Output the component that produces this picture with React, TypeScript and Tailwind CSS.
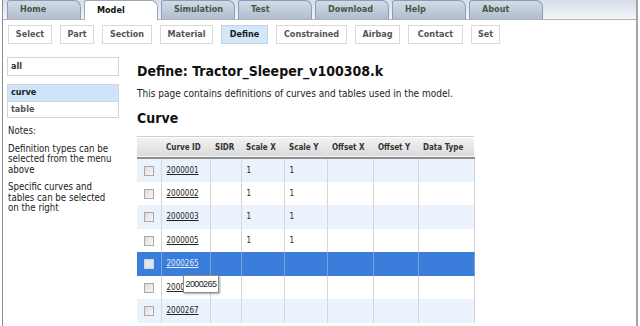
import React from "react";

const tabs = ["Home", "Model", "Simulation", "Test", "Download", "Help", "About"];
const subTabs = [
  { label: "Select", w: "w-[44px]" },
  { label: "Part", w: "w-[34px]" },
  { label: "Section", w: "w-[50px]" },
  { label: "Material", w: "w-[53px]" },
  { label: "Define", w: "w-[47px]" },
  { label: "Constrained", w: "w-[71px]" },
  { label: "Airbag", w: "w-[45px]" },
  { label: "Contact", w: "w-[55px]" },
  { label: "Set", w: "w-[29px]" },
];
const columns = ["Curve ID", "SIDR", "Scale X", "Scale Y", "Offset X", "Offset Y", "Data Type"];
const colWidths = ["w-[24px]", "w-[49px]", "w-[31px]", "w-[43px]", "w-[43px]", "w-[46px]", "w-[45px]", "w-[56px]"];

const rows = [
  { id: "2000001", sx: "1", sy: "1" },
  { id: "2000002", sx: "1", sy: "1" },
  { id: "2000003", sx: "1", sy: "1" },
  { id: "2000005", sx: "1", sy: "1" },
  { id: "2000265", sx: "", sy: "", selected: true },
  { id: "2000266", sx: "", sy: "" },
  { id: "2000267", sx: "", sy: "" },
];

function Checkbox({ selected }: { selected?: boolean }) {
  return (
    <span
      className={
        "block h-[10px] w-[10px] border " +
        (selected ? "border-[#c8d6ea] bg-[#dfe6ef]" : "border-[#a9a9a9] bg-gradient-to-br from-[#dcdcdc] to-[#f8f8f8]")
      }
    />
  );
}

export default function App() {
  return (
    <div className="relative h-[326px] w-[640px] overflow-hidden bg-white font-['DejaVu_Sans_Condensed','DejaVu_Sans',sans-serif]">
      <div className="ml-[2px] flex h-full w-[636px] flex-col border-l border-r-2 border-l-[#8c8c8c] border-r-[#a5a5a5]">
        {/* main tabs */}
        <div className="flex h-[20px] items-end gap-[3px] border-b border-[#bcaeb0] bg-gradient-to-b from-[#d6dfea] to-[#f3f4f7] pl-[4px]">
          {tabs.map((t) => (
            <div
              key={t}
              className={
                "flex h-[19px] w-[74px] items-center rounded-tl-[3px] rounded-tr-[7px] border border-b-0 pl-[12px] text-[9px] font-bold " +
                (t === "Model"
                  ? "relative top-[1px] h-[20px] border-[#9aa8ba] bg-white text-[#111]"
                  : "border-[#8d9cb2] bg-gradient-to-b from-[#d3dbe7] to-[#aebdd0] text-[#4b5640]")
              }
            >
              {t}
            </div>
          ))}
        </div>

        {/* sub tabs */}
        <div className="mt-[5px] flex h-[19px] pl-[5px]">
          {subTabs.map((s) => (
            <div
              key={s.label}
              className={
                s.w +
                " mr-[8px] flex h-[19px] items-center justify-center border text-[9px] font-bold " +
                (s.label === "Define"
                  ? "border-[#c3d3e3] bg-[#d3e7fb] text-[#1a1a1a]"
                  : "border-[#d9d9d9] bg-white text-[#555]")
              }
            >
              {s.label}
            </div>
          ))}
        </div>

        <div className="mt-[13px] flex">
          {/* sidebar */}
          <div className="ml-[4px] w-[112px] shrink-0">
            <div className="flex h-[19px] items-center border border-[#d4d4d4] px-[3px] text-[9px] font-bold text-[#333]">all</div>
            <div className="mt-[8px] border border-[#d4d4d4]">
              <div className="flex h-[16px] items-center bg-[#cfe4fb] px-[3px] text-[9px] font-bold text-[#222]">curve</div>
              <div className="flex h-[16px] items-center border-t border-[#d4d4d4] px-[3px] text-[9px] font-bold text-[#555]">table</div>
            </div>
            <div className="mt-[8px] w-[106px] pl-[1px] text-[9.6px] leading-[10.5px] text-[#222]">
              <p>Notes:</p>
              <p className="mt-[7px]">Definition types can be selected from the menu above</p>
              <p className="mt-[7px]">Specific curves and tables can be selected on the right</p>
            </div>
          </div>

          {/* main */}
          <div className="ml-[18px] flex-1">
            <h1 className="mt-[6px] text-[14px] font-bold leading-[16px] text-[#111]">Define: Tractor_Sleeper_v100308.k</h1>
            <p className="mt-[9px] text-[10px] leading-[11px] text-[#222]">
              This page contains definitions of curves and tables used in the model.
            </p>
            <h2 className="mt-[11px] text-[14px] font-bold leading-[16px] text-[#111]">Curve</h2>
            <div className="mt-[10px] w-[337px] border-t border-[#d0d0d0] pt-[1px]">
              <table className="w-[337px] table-fixed border-collapse text-[8px] text-[#222]">
                <thead>
                  <tr className="h-[20px] border-b-2 border-[#8e8e8e] bg-gradient-to-b from-[#f3f3f3] to-[#dadada]">
                    <th className={colWidths[0]} />
                    {columns.map((c, i) => (
                      <th key={c} className={colWidths[i + 1] + " px-[5px] text-left text-[8px] font-bold text-[#333]"}>
                        {c}
                      </th>
                    ))}
                  </tr>
                </thead>
                <tbody>
                  {rows.map((r, i) => {
                    const bg = r.selected ? "bg-[#3b7ddb]" : i % 2 === 0 ? "bg-[#eaf2fc]" : "bg-white";
                    const line = r.selected ? "border-[#76a2e2]" : "border-[#d6d6d6]";
                    const cells = ["", r.sx, r.sy, "", "", ""];
                    return (
                      <tr key={r.id} className={bg + (i % 2 === 0 ? " h-[24px]" : " h-[23px]")}>
                        <td className={"border-r pl-[7px] " + line}>
                          <Checkbox selected={r.selected} />
                        </td>
                        <td className={"relative border-r px-[5px] " + line}>
                          <a className={"underline " + (r.selected ? "text-[#e6eefb]" : "text-[#222]")}>{r.id}</a>
                          {r.id === "2000266" && (
                            <div className="absolute left-[21px] top-[-1px] z-10 border border-[#8d8d8d] bg-white px-[2px] py-[3px] font-['Liberation_Sans',sans-serif] text-[9px] leading-[10px] tracking-[-0.6px] text-[#222] shadow-[1px_1px_2px_rgba(0,0,0,0.35)]">
                              2000265
                            </div>
                          )}
                        </td>
                        {cells.map((c, j) => (
                          <td key={j} className={"border-r px-[5px] text-[#222] " + line}>
                            {c}
                          </td>
                        ))}
                      </tr>
                    );
                  })}
                </tbody>
              </table>
            </div>
          </div>
        </div>
      </div>
    </div>
  );
}
